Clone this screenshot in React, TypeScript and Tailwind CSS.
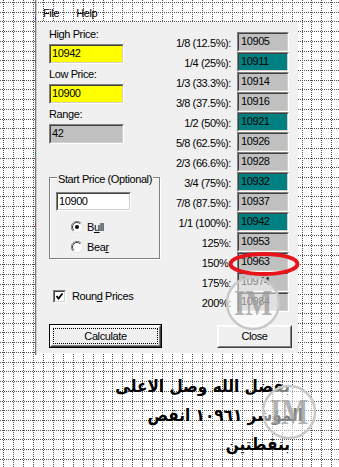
import React from "react";

const ROWS: [string, string, boolean][] = [
  ["1/8 (12.5%):", "10905", false],
  ["1/4 (25%):", "10911", true],
  ["1/3 (33.3%):", "10914", false],
  ["3/8 (37.5%):", "10916", false],
  ["1/2 (50%):", "10921", true],
  ["5/8 (62.5%):", "10926", false],
  ["2/3 (66.6%):", "10928", false],
  ["3/4 (75%):", "10932", true],
  ["7/8 (87.5%):", "10937", false],
  ["1/1 (100%):", "10942", true],
  ["125%:", "10953", false],
  ["150%:", "10963", false],
  ["175%:", "10974", false],
  ["200%:", "10984", false],
];

function GridPaper() {
  const xs = Array.from({ length: 35 }, (_, k) => Math.round(3 + 9.95 * k));
  const ys = Array.from({ length: 49 }, (_, k) => Math.round(2 + 9.72 * k));
  return (
    <svg className="absolute inset-0" width={339} height={467} shapeRendering="crispEdges">
      {xs.map((x) => (
        <line key={"x" + x} x1={x + 0.5} y1={0} x2={x + 0.5} y2={467} stroke="#505050" strokeDasharray="1 1" />
      ))}
      {ys.map((y) => (
        <line key={"y" + y} x1={0} y1={y + 0.5} x2={339} y2={y + 0.5} stroke="#505050" strokeDasharray="1 1" />
      ))}
    </svg>
  );
}

function Sunken({ outer, inner, children }: { outer: string; inner: string; children?: React.ReactNode }) {
  return (
    <div className={"border border-t-[#808080] border-l-[#808080] border-b-white border-r-white " + outer}>
      <div className={"h-full border border-t-[#404040] border-l-[#404040] border-b-[#d4d0c8] border-r-[#d4d0c8] " + inner}>
        {children}
      </div>
    </div>
  );
}

function Radio({ checked }: { checked: boolean }) {
  return (
    <svg width={12} height={12} viewBox="0 0 12 12">
      <circle cx={6} cy={6} r={5.5} fill="#fff" stroke="#e4e4e4" />
      <path d="M 10 2 A 5.5 5.5 0 0 0 2 10" fill="none" stroke="#808080" />
      <path d="M 9.2 2.8 A 4.5 4.5 0 0 0 2.8 9.2" fill="none" stroke="#404040" />
      {checked && <circle cx={6} cy={6} r={2} fill="#000" />}
    </svg>
  );
}

function Watermark({ cls }: { cls: string }) {
  return (
    <svg className={"absolute " + cls} width={60} height={60} viewBox="0 0 60 60">
      <circle cx={30} cy={30} r={26} fill="#ffffff" fillOpacity={0.5} stroke="#c8c8c8" strokeWidth={2.5} />
      <text
        x={30}
        y={42}
        textAnchor="middle"
        fontFamily="'Liberation Serif', serif"
        fontWeight="bold"
        fontSize={36}
        textLength={38}
        lengthAdjust="spacingAndGlyphs"
        fill="#9a9a9a"
        fillOpacity={0.75}
      >
        IM
      </text>
    </svg>
  );
}

export default function App() {
  return (
    <div className="relative h-[467px] w-[339px] overflow-hidden bg-white font-['Liberation_Sans',Arial,sans-serif] text-[11px] leading-[13px] tracking-[-0.4px] text-black">
      <GridPaper />
      <div className="relative flex flex-col">
        <div className="flex">
          <div className="w-[35px] shrink-0" />
          <div className="flex h-[355px] w-[2px] shrink-0">
            <div className="w-px bg-[#777777]" />
            <div className="w-px bg-[#cfcfcf]" />
          </div>
          <div className="flex w-[261px] flex-col">
            <div className="flex h-[22px] gap-[17px] pl-[6px] pt-[7px]">
              <span>File</span>
              <span>Help</span>
            </div>
            <div className="flex h-[331px] bg-[#f0f0f0] pl-[12px]">
              {/* left column */}
              <div className="flex w-[113px] shrink-0 flex-col pt-[6px]">
                <div>High Price:</div>
                <Sunken outer="mt-[3px] h-[20px] w-[75px]" inner="bg-[#ffff00] pl-[1px] pt-[1px]">10942</Sunken>
                <div className="mt-[4px]">Low Price:</div>
                <Sunken outer="mt-[3px] h-[20px] w-[75px]" inner="bg-[#ffff00] pl-[1px] pt-[1px]">10900</Sunken>
                <div className="mt-[4px]">Range:</div>
                <Sunken outer="mt-[3px] h-[20px] w-[75px]" inner="bg-[#c0c0c0] pl-[1px] pt-[1px]">42</Sunken>

                <div className="mt-[33px] flex h-[82px] w-[111px] flex-col border border-[#808080] shadow-[inset_1px_1px_0_#fff,1px_1px_0_#fff]">
                  <span className="-mt-[5px] ml-[7px] self-start whitespace-nowrap bg-[#f0f0f0] px-[1px]">
                    Start Price (Optional)
                  </span>
                  <Sunken outer="ml-[6px] mt-[6px] h-[19px] w-[75px]" inner="bg-white pl-[1px] pt-[1px]">10900</Sunken>
                  <div className="mt-[6px] flex h-[20px] items-center gap-[4px] pl-[21px]">
                    <Radio checked />
                    <span>
                      B<u>u</u>ll
                    </span>
                  </div>
                  <div className="flex h-[20px] items-center gap-[4px] pl-[21px]">
                    <Radio checked={false} />
                    <span>
                      Bea<u>r</u>
                    </span>
                  </div>
                </div>

                <div className="mt-[27px] flex h-[20px] items-center gap-[6px] pl-[4px]">
                  <Sunken outer="h-[13px] w-[13px]" inner="bg-white">
                    <svg width={9} height={9} viewBox="0 0 9 9">
                      <polyline points="1.5,4 3.5,6.5 7.5,1.5" fill="none" stroke="#000" strokeWidth={1.8} />
                    </svg>
                  </Sunken>
                  <span>
                    Roun<u>d</u> Prices
                  </span>
                </div>

                <div className="mt-[18px] h-[24px] w-[113px] border border-black">
                  <div className="h-full border border-t-white border-l-white border-b-[#404040] border-r-[#404040]">
                    <div className="h-full border border-t-[#f8f8f8] border-l-[#f8f8f8] border-b-[#808080] border-r-[#808080] p-[1px]">
                      <div className="flex h-full items-center justify-center border border-dotted border-black">
                        Calculate
                      </div>
                    </div>
                  </div>
                </div>
              </div>

              {/* right column */}
              <div className="flex flex-1 flex-col items-end pr-[9px] pt-[10px]">
                {ROWS.map(([label, value, teal]) => (
                  <div key={label} className="flex h-[20px] items-start">
                    <span className="whitespace-nowrap pr-[6px] pt-[5px]">{label}</span>
                    <Sunken
                      outer="h-[20px] w-[52px]"
                      inner={(teal ? "bg-[#008080]" : "bg-[#c0c0c0]") + " pl-[2px] pt-[1px]"}
                    >
                      {value}
                    </Sunken>
                  </div>
                ))}
                <div className="-mr-[3px] mt-[13px] h-[23px] w-[75px] border border-t-white border-l-white border-b-[#404040] border-r-[#404040]">
                  <div className="flex h-full items-center justify-center border border-t-[#fafafa] border-l-[#fafafa] border-b-[#808080] border-r-[#808080]">
                    Close
                  </div>
                </div>
              </div>
            </div>
          </div>
        </div>

        <div
          dir="rtl"
          className="mt-[17px] flex flex-col pr-[49px] font-['DejaVu_Sans_Condensed','DejaVu_Sans',sans-serif] text-[17px] font-bold leading-[29px] tracking-normal"
        >
          <div>بفضل الله وصل الاعلى</div>
          <div className="-mr-[13px]">المؤشر ١٠٩٦١ انقص</div>
          <div>بنقطتين</div>
        </div>
      </div>

      {/* left-line colour specks */}
      <span className="absolute left-[35px] top-[17px] h-[3px] w-px bg-[#3050c0]" />
      <span className="absolute left-[35px] top-[61px] h-[2px] w-px bg-[#2a8a3a]" />
      <span className="absolute left-[35px] top-[152px] h-[3px] w-px bg-[#1a8a7a]" />
      <span className="absolute left-[35px] top-[223px] h-[3px] w-px bg-[#b03040]" />

      {/* red ellipse annotation */}
      <svg className="absolute left-[226px] top-[250px]" width={76} height={28} viewBox="0 0 76 28">
        <ellipse cx={38} cy={14} rx={33.5} ry={10} fill="none" stroke="#e8141c" strokeWidth={4} />
      </svg>

      <Watermark cls="left-[223px] top-[273px]" />
      <Watermark cls="left-[259px] top-[382px]" />
    </div>
  );
}
